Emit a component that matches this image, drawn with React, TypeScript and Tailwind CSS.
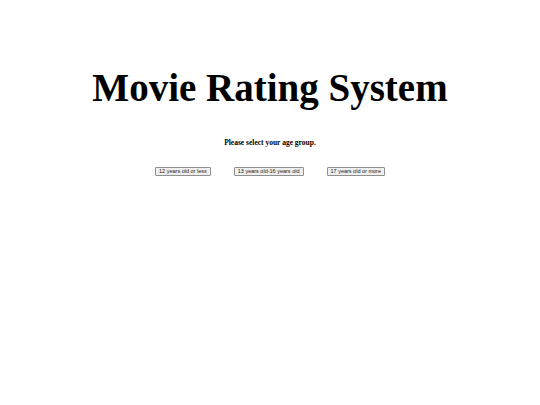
export default function App() {
  const groups = ["12 years old or less", "13 years old-16 years old", "17 years old or more"];
  return (
    <div className="min-h-[405px] w-full bg-white pt-[64px] text-center font-['Liberation_Serif',serif] text-black">
      <h1 className="text-[39px] font-bold leading-[48px]">Movie Rating System</h1>
      <p className="mt-[26px] text-[7.5px] font-bold leading-[10px]">Please select your age group.</p>
      <div className="mt-[19px] flex justify-center gap-[23px]">
        {groups.map((g) => (
          <button
            key={g}
            className="h-[9px] rounded-[1px] border border-[#8f8f8f] bg-[#efefef] px-[3px] font-['Liberation_Sans',sans-serif] text-[5.5px] leading-[7px] text-[#222]"
          >
            {g}
          </button>
        ))}
      </div>
    </div>
  );
}
